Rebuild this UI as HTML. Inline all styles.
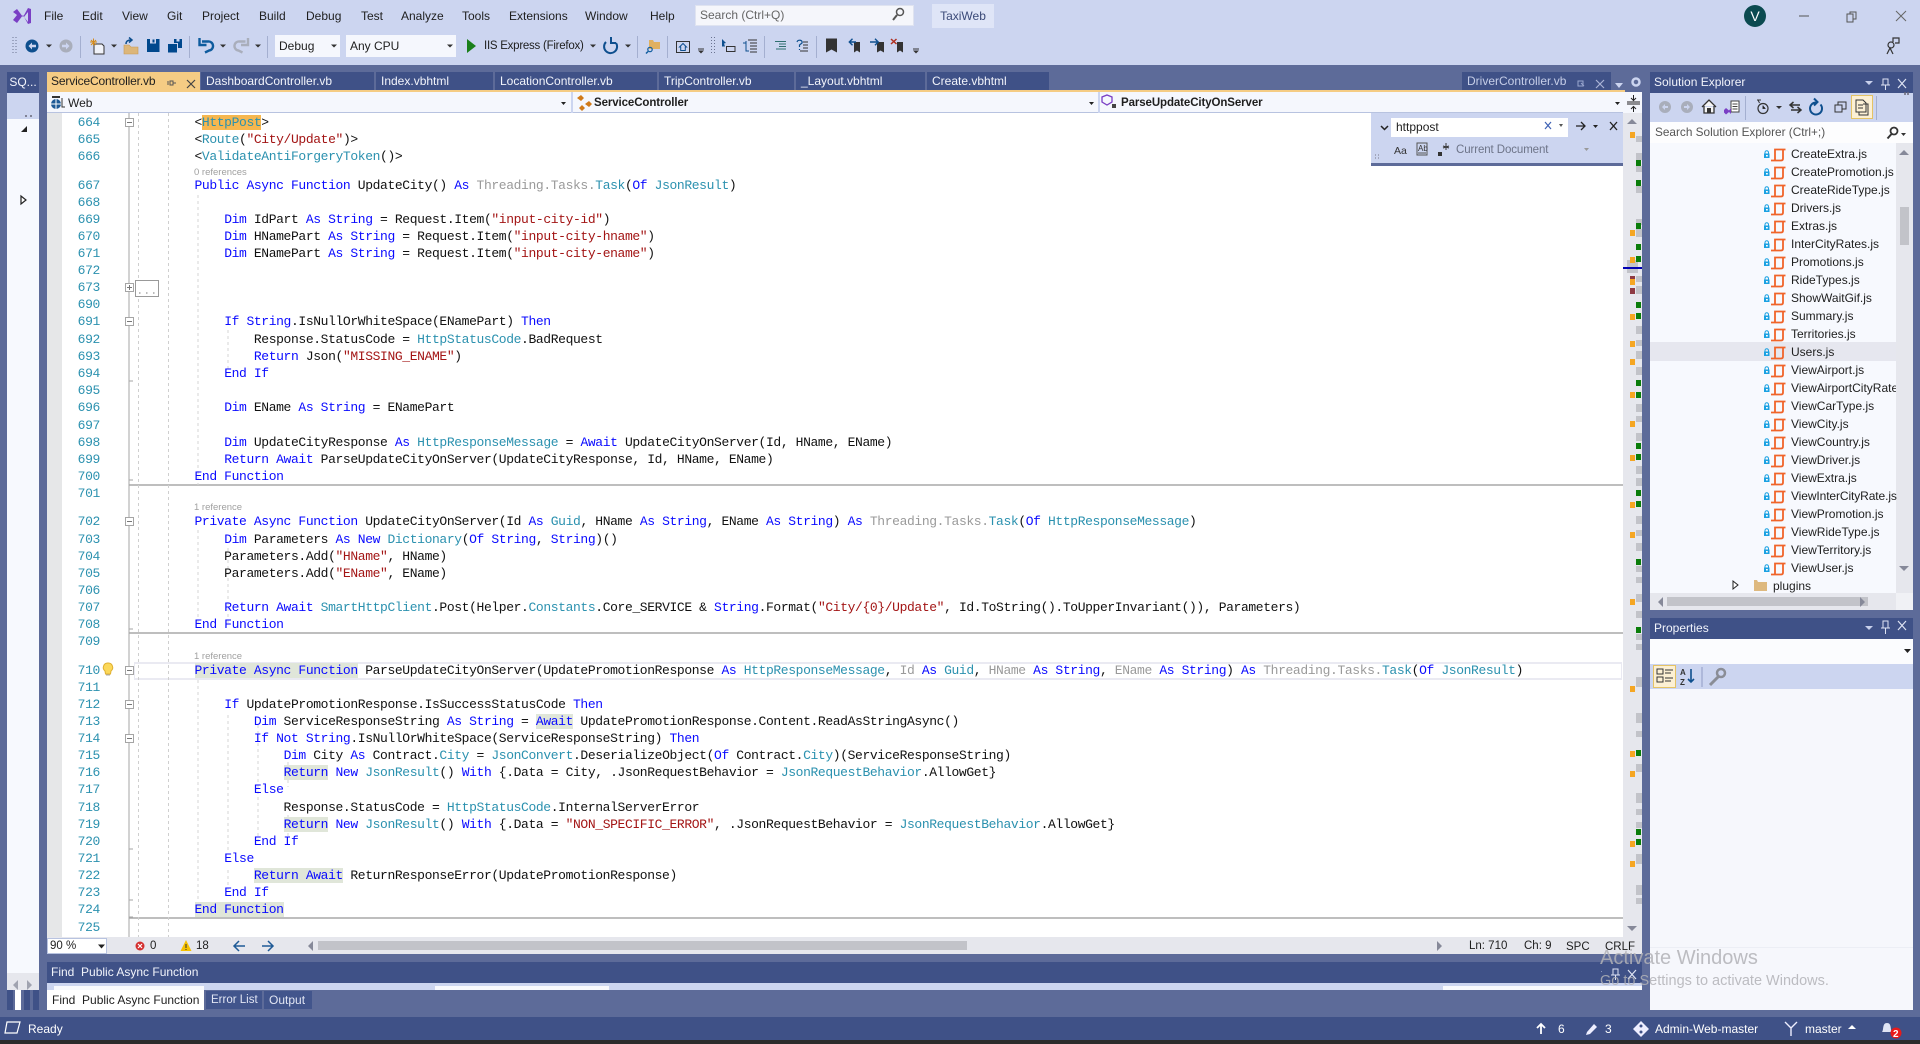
<!DOCTYPE html>
<html><head><meta charset="utf-8"><title>TaxiWeb</title>
<style>
html,body{margin:0;padding:0;background:#5d6b99}
#r{position:relative;width:1920px;height:1044px;overflow:hidden;background:#5d6b99;font:12px "Liberation Sans",sans-serif;color:#1e1e1e}
#r div{position:absolute;white-space:pre}
.b{position:absolute}
.m{top:9px;height:15px;line-height:15px;color:#1e1e1e}
.tb{top:72px;height:18px;line-height:18px;background:#3f5187;color:#f2f4fb;padding-left:5px;box-sizing:border-box}
.c{left:194.5px;height:17px;font:13px/17px "Liberation Mono",monospace;letter-spacing:-.38px;color:#111}
.n{left:70px;width:30px;text-align:right;height:17px;font:13px/17px "Liberation Mono",monospace;letter-spacing:-.36px;color:#2b91af}
.r{left:194px;font-size:9.5px;line-height:11px;color:#a0a0a0}
.f{left:1791px;height:18px;line-height:18px;color:#1e1e1e;font-size:12px}
.k{color:#0a0aff}.t{color:#2b91af}.s{color:#a31515}.g{color:#9a9a9a}
.h{background:#e0e6d9}
.w{color:#fff}
</style></head><body><div id="r">

<!-- top chrome -->
<div style="left:0;top:0;width:1920px;height:65px;background:#ccd5f0"></div>
<div class="m" style="left:44px">File</div><div class="m" style="left:82px">Edit</div><div class="m" style="left:122px">View</div><div class="m" style="left:167px">Git</div><div class="m" style="left:202px">Project</div><div class="m" style="left:259px">Build</div><div class="m" style="left:306px">Debug</div><div class="m" style="left:361px">Test</div><div class="m" style="left:401px">Analyze</div><div class="m" style="left:462px">Tools</div><div class="m" style="left:509px">Extensions</div><div class="m" style="left:585px">Window</div><div class="m" style="left:650px">Help</div>
<div style="left:695px;top:5px;width:219px;height:21px;background:#f5f6fb;border:1px solid #dfe3f0;box-sizing:border-box;line-height:19px;padding-left:4px;color:#666">Search (Ctrl+Q)</div>
<div style="left:932px;top:4px;width:62px;height:24px;background:#dfe5f7;line-height:24px;text-align:center;color:#3b4a78">TaxiWeb</div>
<div style="left:275px;top:35px;width:65px;height:22px;background:#f5f7fd;line-height:22px;padding-left:4px;box-sizing:border-box">Debug</div>
<div style="left:346px;top:35px;width:110px;height:22px;background:#f5f7fd;line-height:22px;padding-left:4px;box-sizing:border-box">Any CPU</div>
<div style="left:484px;top:38px;line-height:16px;color:#1e1e1e;font-size:11.5px;letter-spacing:-.25px">IIS Express (Firefox)</div>
<div style="left:1744px;top:5px;width:22px;height:22px;border-radius:50%;background:#0b4a50;color:#fff;text-align:center;line-height:22px;font-size:14px">V</div>

<svg class="b" style="left:0;top:0" width="1920" height="65">
<path d="M13 12l4-3 6 8 5-9 3 1v14l-3 1-5-9-6 8-4-3 4-5z" fill="#7a3fc4"/><path d="M24 17l4-5v10z" fill="#ccd5f0"/>
<circle cx="900" cy="12" r="3.5" fill="none" stroke="#555" stroke-width="1.5"/><path d="M897 15l-4 5" stroke="#555" stroke-width="2"/>
<path d="M1799 16h10" stroke="#555" stroke-width="1"/><path d="M1847 14h6v8h-6zM1850 14v-2h6v7h-3" fill="none" stroke="#555"/><path d="M1896 11l10 10M1906 11l-10 10" stroke="#666" stroke-width="1"/>
<!-- grips -->
<path d="M13 37v17M16 37v17M711.500 37v17M714.500 37v17" stroke="#6a7390" stroke-dasharray="1 2"/>
<!-- nav -->
<circle cx="32" cy="46" r="6.500" fill="#0e4f8e"/><path d="M28.500 46l3.500-3.500v2.300h4v2.400h-4v2.300z" fill="#ccd5f0"/>
<circle cx="66" cy="46" r="6.500" fill="#a9aebb"/><path d="M69.500 46l-3.500-3.500v2.300h-4v2.400h4v2.300z" fill="#ccd5f0"/>
<g fill="#333"><path d="M46 44.500h6l-3 3zM111 44.500h6l-3 3zM220 44.500h6l-3 3zM255 44.500h6l-3 3zM331 44.500h6l-3 3zM447 44.500h6l-3 3zM590 44.500h6l-3 3zM625 44.500h6l-3 3z"/></g>
<path d="M80.500 36v22M189.500 36v22M267.500 36v22M637.500 36v22M667.500 36v22M764.500 36v22M816.500 36v22" stroke="#a4afd0"/>
<!-- new project -->
<path d="M94 44h8l2 2v8H94z" fill="#f0f2f9" stroke="#333"/><path d="M90 42h7M93.500 38.500v7M91 40l5 5M96 40l-5 5" stroke="#d48a1a"/>
<!-- open -->
<path d="M124 45h5l2 2h7v7h-14z" fill="#dcb67a" stroke="#c79a55" stroke-width=".6"/><path d="M126 44c0-3 2-4 5-4M129 37.500l3 2.500-3 2.500" fill="none" stroke="#0e4f8e" stroke-width="1.500"/>
<!-- save -->
<path d="M147 39h12.500v13H147z" fill="#00488d"/><rect x="150" y="39" width="6" height="4.500" fill="#ccd5f0"/><rect x="152.500" y="39.500" width="2" height="3" fill="#00488d"/>
<path d="M168 44h9v8.500h-9z" fill="#00488d"/><path d="M174 39h8v9h-4v-5h-4z" fill="#00488d"/><rect x="176.500" y="39" width="3" height="2.500" fill="#ccd5f0"/>
<!-- undo/redo -->
<path d="M202 41.500h6a4.500 4.500 0 0 1 1 9l-4 2M199.500 38v7h7" fill="none" stroke="#0e5c9e" stroke-width="2.400"/>
<path d="M245.500 41.500h-6a4.500 4.500 0 0 0-1 9l4 2M248 38v7h-7" fill="none" stroke="#a9aebb" stroke-width="2.400"/>
<path d="M467 39l9 7-9 7z" fill="#1a7f1a"/>
<path d="M606 42a6.500 6.500 0 1 0 10 1M611 37v6h5" fill="none" stroke="#0e4f8e" stroke-width="2"/>
<!-- find in files folder -->
<path d="M649 40h4l1 2h6v7h-11z" fill="#e0b060"/><circle cx="650" cy="49.500" r="2.200" fill="none" stroke="#0e5c9e" stroke-width="1.200"/><path d="M648 51.500l-2 2" stroke="#0e5c9e" stroke-width="1.500"/>
<!-- browser -->
<rect x="676.500" y="41.500" width="13" height="11" fill="none" stroke="#333"/><path d="M683 43.500l-3.500 3.500h1.200v3.500h4.600V47h1.200z" fill="none" stroke="#0e4f8e"/>
<path d="M698 49h6" stroke="#333"/><path d="M698 50.500h6l-3 3z" fill="#333"/>
<path d="M913 49h6" stroke="#333"/><path d="M913 50.500h6l-3 3z" fill="#333"/>
<!-- comment boxes -->
<path d="M722 39l4 4-2 .5 1 3h-3z" fill="#0e4f8e"/><rect x="726.500" y="46.500" width="8.500" height="5" fill="none" stroke="#333"/>
<path d="M743 43h3v8h3M746 41v4" fill="none" stroke="#0e4f8e"/><path d="M748 40h9M750 43h7M750 46h7M750 49h7M750 52h7" stroke="#333"/>
<path d="M775 41.500h11M779 44h7M779 46.500h7M776 49h10" stroke="#2f6f6f"/>
<path d="M797 42c1-3 6-2 5 1l-2.500 2v2M799.500 49v1" fill="none" stroke="#0e4f8e" stroke-width="1.200"/><path d="M803 42h5M803 45h5M803 48h5M800 51h8" stroke="#333"/>
<!-- bookmarks -->
<path d="M826 38.500h11v14l-5.500-3-5.500 3z" fill="#333"/>
<path d="M854 42h6v10.500l-3-2-3 2z" fill="#333"/><path d="M849 42h7M852.500 38.800l-3.200 3.200 3.200 3.200" fill="none" stroke="#0e4f8e" stroke-width="1.400"/>
<path d="M877 42h7v10.500l-3.500-2-3.500 2z" fill="#333"/><path d="M870 42h7M875 38.800l3.200 3.200-3.200 3.200" fill="none" stroke="#0e4f8e" stroke-width="1.400"/>
<path d="M897 42h6v10.500l-3-2-3 2z" fill="#333"/><path d="M891 39l5.500 5M896.500 39l-5.500 5" stroke="#b03020" stroke-width="1.500"/>
<circle cx="1891" cy="45" r="3" fill="none" stroke="#333" stroke-width="1.200"/><path d="M1887 54l3-6 3 6M1893 42v-4h6v5h-4" fill="none" stroke="#333" stroke-width="1.200"/>
</svg>

<!-- tab row -->
<div style="left:7px;top:72px;width:32px;height:21px;background:#3f5187;color:#f2f4fb;line-height:21px;text-align:center">SQ...</div>
<div style="left:7px;top:93px;width:32px;height:26px;background:#ccd5f0"></div>
<div style="left:7px;top:119px;width:32px;height:854px;background:#f7f9fe"></div>
<div style="left:7px;top:973px;width:32px;height:17px;background:#e6e7ed"></div>
<div style="left:47px;top:72px;width:153px;height:18px;background:#f5cc84;line-height:18px;padding-left:4px;box-sizing:border-box;letter-spacing:-.15px">ServiceController.vb</div>
<div class="tb" style="left:201px;width:173px">DashboardController.vb</div>
<div class="tb" style="left:376px;width:117px">Index.vbhtml</div>
<div class="tb" style="left:495px;width:162px">LocationController.vb</div>
<div class="tb" style="left:659px;width:135px">TripController.vb</div>
<div class="tb" style="left:796px;width:129px">_Layout.vbhtml</div>
<div class="tb" style="left:927px;width:122px">Create.vbhtml</div>
<div class="tb" style="left:1462px;width:149px;color:#c6cee8">DriverController.vb</div>
<div style="left:47px;top:90px;width:1578px;height:2px;background:#f5cc84"></div>
<svg class="b" style="left:0;top:60px" width="1920" height="60">
<path d="M170 21h3v4h-3zM173 23h3M168 21v4" stroke="#555" fill="none"/><path d="M187 20l8 8M195 20l-8 8" stroke="#444" stroke-width="1.200"/>
<path d="M1578 21h5v5h-5zM1581 23l3 3" stroke="#9aa6cf" fill="none"/><path d="M1596 20l8 8M1604 20l-8 8" stroke="#aab4d6" stroke-width="1.200"/>
<path d="M1615 23h8l-4 5z" fill="#ccd5f0"/><circle cx="1636" cy="22" r="3.500" fill="none" stroke="#ccd5f0" stroke-width="2.500"/>
</svg>

<!-- nav bar -->
<div style="left:47px;top:92px;width:1578px;height:21px;background:#f5f7fd"></div>
<div style="left:47px;top:112px;width:1576px;height:1px;background:#b8c3e0"></div>
<div style="left:571px;top:92px;width:2px;height:21px;background:#ccd5f0"></div>
<div style="left:1098px;top:92px;width:2px;height:21px;background:#ccd5f0"></div>
<div style="left:68px;top:94px;line-height:19px">Web</div>
<div style="left:594px;top:95px;line-height:17px;font-weight:bold;font-size:11.500px;letter-spacing:-.1px">ServiceController</div>
<div style="left:1121px;top:95px;line-height:17px;font-weight:bold;font-size:11.500px;letter-spacing:-.1px">ParseUpdateCityOnServer</div>
<div style="left:1625px;top:92px;width:17px;height:21px;background:#f5f7fd"></div>
<svg class="b" style="left:0;top:90px" width="1920" height="26">
<circle cx="56" cy="14" r="5" fill="#1e5a96"/><path d="M51 14h10M56 9v10" stroke="#fff"/><rect x="52" y="6" width="8" height="2" fill="#333"/><path d="M62 8v9h3" stroke="#333" fill="none"/>
<path d="M561 12h5l-2.500 3zM1089 12h5l-2.500 3zM1615 12h5l-2.500 3z" fill="#222"/>
<path d="M577 8l4-3 3 3-3 3zM585 14l4-3 3 3-3 3zM579 18l3-3 3 3-3 3z" fill="#d07a1a"/>
<path d="M1107 5l5 2v5l-5 3-5-3v-5z" fill="none" stroke="#7a3fc4" stroke-width="1.300"/><rect x="1112" y="14" width="4" height="4" fill="#444"/>
<path d="M1627 12h13M1627 14h13M1633.500 5v5M1633.500 17v5" stroke="#222"/><path d="M1631 8l2.500 2.500 2.500-2.500M1631 19l2.500-2.500 2.500 2.500" stroke="#222" fill="none"/>
</svg>

<!-- editor -->
<div style="left:47px;top:113px;width:1576px;height:824px;background:#fff;overflow:hidden"></div>
<div style="left:47px;top:113px;width:15px;height:824px;background:#e6e7e8"></div>
<div style="left:134px;top:662px;width:1488px;height:18px;border:1px solid #eaeaf2;border-width:2px 1px;box-sizing:border-box"></div>
<svg class="b" style="left:0;top:0" width="1642" height="937">
<path d="M129 113v824" stroke="#a5a5a5"/>
<path d="M129 485H1623M129 633H1623M129 918H1623" stroke="#a8a8a8" stroke-width="1.500"/>
<path d="M138.500 113v824M168.500 113v824" stroke="#cfcfcf" stroke-dasharray="3 3"/>
<path d="M198 195v290M198 530v94M198 680v225M228 330v40M228 548v76M228 715v135M258 725v120M228 870v20M288 762v25M288 815v22" stroke="#d4d4d4" stroke-dasharray="3 3"/>
<g fill="#fff" stroke="#a5a5a5"><rect x="125.500" y="118.500" width="8" height="8"/><rect x="125.500" y="283.500" width="8" height="8"/><rect x="125.500" y="317.500" width="8" height="8"/><rect x="125.500" y="517.500" width="8" height="8"/><rect x="125.500" y="666.500" width="8" height="8"/><rect x="125.500" y="700.500" width="8" height="8"/><rect x="125.500" y="734.500" width="8" height="8"/></g>
<path d="M127 122.500h5M127 287.500h5M129.500 285v5M127 321.500h5M127 521.500h5M127 670.500h5M127 704.500h5M127 738.500h5" stroke="#777"/>
<path d="M129 381h4M129 480h4M129 629h4M129 849h4M129 900h4M129 917h4" stroke="#a5a5a5"/>
<rect x="135.500" y="280.500" width="23" height="16" fill="#fff" stroke="#999"/><path d="M139 293h1.500M146 293h1.500M153 293h1.500" stroke="#777"/>
<path d="M108 663a4.500 4.500 0 0 1 3 8l-.5 3h-5l-.5-3a4.500 4.500 0 0 1 3-8z" fill="#fbd85a" stroke="#e0b030"/><path d="M106 675h4" stroke="#aaa"/>
</svg>

<div class="n" style="top:114px">664</div><div class="n" style="top:131px">665</div><div class="n" style="top:148px">666</div><div class="n" style="top:177px">667</div><div class="n" style="top:194px">668</div><div class="n" style="top:211px">669</div><div class="n" style="top:228px">670</div><div class="n" style="top:245px">671</div><div class="n" style="top:262px">672</div><div class="n" style="top:279px">673</div><div class="n" style="top:296px">690</div><div class="n" style="top:313px">691</div><div class="n" style="top:331px">692</div><div class="n" style="top:348px">693</div><div class="n" style="top:365px">694</div><div class="n" style="top:382px">695</div><div class="n" style="top:399px">696</div><div class="n" style="top:417px">697</div><div class="n" style="top:434px">698</div><div class="n" style="top:451px">699</div><div class="n" style="top:468px">700</div><div class="n" style="top:485px">701</div><div class="n" style="top:513px">702</div><div class="n" style="top:531px">703</div><div class="n" style="top:548px">704</div><div class="n" style="top:565px">705</div><div class="n" style="top:582px">706</div><div class="n" style="top:599px">707</div><div class="n" style="top:616px">708</div><div class="n" style="top:633px">709</div><div class="n" style="top:662px">710</div><div class="n" style="top:679px">711</div><div class="n" style="top:696px">712</div><div class="n" style="top:713px">713</div><div class="n" style="top:730px">714</div><div class="n" style="top:747px">715</div><div class="n" style="top:764px">716</div><div class="n" style="top:781px">717</div><div class="n" style="top:799px">718</div><div class="n" style="top:816px">719</div><div class="n" style="top:833px">720</div><div class="n" style="top:850px">721</div><div class="n" style="top:867px">722</div><div class="n" style="top:884px">723</div><div class="n" style="top:901px">724</div><div class="n" style="top:919px">725</div>

<div class="r" style="top:167px">0 references</div>
<div class="r" style="top:502px">1 reference</div>
<div class="r" style="top:651px">1 reference</div>

<div class="c" style="top:114px">&lt;<span class="t" style="background:#f6b74f">HttpPost</span>&gt;</div>
<div class="c" style="top:131px">&lt;<span class="t">Route</span>(<span class="s">"City/Update"</span>)&gt;</div>
<div class="c" style="top:148px">&lt;<span class="t">ValidateAntiForgeryToken</span>()&gt;</div>
<div class="c" style="top:177px"><span class="k">Public Async Function</span> UpdateCity() <span class="k">As</span> <span class="g">Threading.Tasks.</span><span class="t">Task</span>(<span class="k">Of</span> <span class="t">JsonResult</span>)</div>
<div class="c" style="top:211px">    <span class="k">Dim</span> IdPart <span class="k">As</span> <span class="k">String</span> = Request.Item(<span class="s">"input-city-id"</span>)</div>
<div class="c" style="top:228px">    <span class="k">Dim</span> HNamePart <span class="k">As</span> <span class="k">String</span> = Request.Item(<span class="s">"input-city-hname"</span>)</div>
<div class="c" style="top:245px">    <span class="k">Dim</span> ENamePart <span class="k">As</span> <span class="k">String</span> = Request.Item(<span class="s">"input-city-ename"</span>)</div>
<div class="c" style="top:313px">    <span class="k">If</span> <span class="k">String</span>.IsNullOrWhiteSpace(ENamePart) <span class="k">Then</span></div>
<div class="c" style="top:331px">        Response.StatusCode = <span class="t">HttpStatusCode</span>.BadRequest</div>
<div class="c" style="top:348px">        <span class="k">Return</span> Json(<span class="s">"MISSING_ENAME"</span>)</div>
<div class="c" style="top:365px">    <span class="k">End If</span></div>
<div class="c" style="top:399px">    <span class="k">Dim</span> EName <span class="k">As</span> <span class="k">String</span> = ENamePart</div>
<div class="c" style="top:434px">    <span class="k">Dim</span> UpdateCityResponse <span class="k">As</span> <span class="t">HttpResponseMessage</span> = <span class="k">Await</span> UpdateCityOnServer(Id, HName, EName)</div>
<div class="c" style="top:451px">    <span class="k">Return Await</span> ParseUpdateCityOnServer(UpdateCityResponse, Id, HName, EName)</div>
<div class="c" style="top:468px"><span class="k">End Function</span></div>
<div class="c" style="top:513px"><span class="k">Private Async Function</span> UpdateCityOnServer(Id <span class="k">As</span> <span class="t">Guid</span>, HName <span class="k">As</span> <span class="k">String</span>, EName <span class="k">As</span> <span class="k">String</span>) <span class="k">As</span> <span class="g">Threading.Tasks.</span><span class="t">Task</span>(<span class="k">Of</span> <span class="t">HttpResponseMessage</span>)</div>
<div class="c" style="top:531px">    <span class="k">Dim</span> Parameters <span class="k">As New</span> <span class="t">Dictionary</span>(<span class="k">Of String</span>, <span class="k">String</span>)()</div>
<div class="c" style="top:548px">    Parameters.Add(<span class="s">"HName"</span>, HName)</div>
<div class="c" style="top:565px">    Parameters.Add(<span class="s">"EName"</span>, EName)</div>
<div class="c" style="top:599px">    <span class="k">Return Await</span> <span class="t">SmartHttpClient</span>.Post(Helper.<span class="t">Constants</span>.Core_SERVICE &amp; <span class="k">String</span>.Format(<span class="s">"City/{0}/Update"</span>, Id.ToString().ToUpperInvariant()), Parameters)</div>
<div class="c" style="top:616px"><span class="k">End Function</span></div>
<div class="c" style="top:662px"><span class="k h">Private Async Function</span> ParseUpdateCityOnServer(UpdatePromotionResponse <span class="k">As</span> <span class="t">HttpResponseMessage</span>, <span class="g">Id</span> <span class="k">As</span> <span class="t">Guid</span>, <span class="g">HName</span> <span class="k">As</span> <span class="k">String</span>, <span class="g">EName</span> <span class="k">As</span> <span class="k">String</span>) <span class="k">As</span> <span class="g">Threading.Tasks.</span><span class="t">Task</span>(<span class="k">Of</span> <span class="t">JsonResult</span>)</div>
<div class="c" style="top:696px">    <span class="k">If</span> UpdatePromotionResponse.IsSuccessStatusCode <span class="k">Then</span></div>
<div class="c" style="top:713px">        <span class="k">Dim</span> ServiceResponseString <span class="k">As</span> <span class="k">String</span> = <span class="k h">Await</span> UpdatePromotionResponse.Content.ReadAsStringAsync()</div>
<div class="c" style="top:730px">        <span class="k">If Not</span> <span class="k">String</span>.IsNullOrWhiteSpace(ServiceResponseString) <span class="k">Then</span></div>
<div class="c" style="top:747px">            <span class="k">Dim</span> City <span class="k">As</span> Contract.<span class="t">City</span> = <span class="t">JsonConvert</span>.DeserializeObject(<span class="k">Of</span> Contract.<span class="t">City</span>)(ServiceResponseString)</div>
<div class="c" style="top:764px">            <span class="k h">Return</span> <span class="k">New</span> <span class="t">JsonResult</span>() <span class="k">With</span> {.Data = City, .JsonRequestBehavior = <span class="t">JsonRequestBehavior</span>.AllowGet}</div>
<div class="c" style="top:781px">        <span class="k">Else</span></div>
<div class="c" style="top:799px">            Response.StatusCode = <span class="t">HttpStatusCode</span>.InternalServerError</div>
<div class="c" style="top:816px">            <span class="k h">Return</span> <span class="k">New</span> <span class="t">JsonResult</span>() <span class="k">With</span> {.Data = <span class="s">"NON_SPECIFIC_ERROR"</span>, .JsonRequestBehavior = <span class="t">JsonRequestBehavior</span>.AllowGet}</div>
<div class="c" style="top:833px">        <span class="k">End If</span></div>
<div class="c" style="top:850px">    <span class="k">Else</span></div>
<div class="c" style="top:867px">        <span class="k h">Return Await</span> ReturnResponseError(UpdatePromotionResponse)</div>
<div class="c" style="top:884px">    <span class="k">End If</span></div>
<div class="c" style="top:901px"><span class="k h">End Function</span></div>

<!-- find widget -->
<div style="left:1371px;top:113px;width:252px;height:53px;background:#ccd5f0;border-bottom:3px solid #5d6b99;box-sizing:border-box"></div>
<div style="left:1391px;top:118px;width:177px;height:19px;background:#fff;line-height:19px;padding-left:5px;box-sizing:border-box;font-size:12px">httppost</div>
<div style="left:1456px;top:143px;line-height:15px;color:#6d7488;font-size:11.500px;letter-spacing:-.1px">Current Document</div>
<div style="left:1394px;top:144px;line-height:14px;font-size:10.500px;color:#333">Aa</div>
<svg class="b" style="left:1371px;top:113px" width="252" height="50">
<path d="M10 13l3.500 3.500L17 13" fill="none" stroke="#222" stroke-width="1.500"/>
<path d="M174 9l6 7M180 9l-6 7" stroke="#3f62b5" stroke-width="1.200"/><path d="M188 11h4l-2 3z" fill="#555"/>
<path d="M205 13h9M210 9l4 4-4 4" fill="none" stroke="#222" stroke-width="1.300"/><path d="M222 12h5l-2.500 3z" fill="#222"/><path d="M239 9l7 8M246 9l-7 8" stroke="#222" stroke-width="1.300"/>
<rect x="46" y="30" width="10" height="12" fill="none" stroke="#555"/><path d="M47 40h8" stroke="#555"/><text x="47" y="38" font-size="8" font-family="Liberation Sans" fill="#333">Ab</text>
<rect x="67" y="39" width="4" height="4" fill="#333"/><path d="M75 30v7M72 33l6 2M78 33l-6 2" stroke="#333"/>
<path d="M213 35h5l-2.500 3z" fill="#999"/>
<path d="M4 45h1M7 45h1M4 42h1M7 42h1" stroke="#778"/>
</svg>

<!-- editor scrollbar -->
<div style="left:1623px;top:113px;width:19px;height:824px;background:#e6e7ed"></div>
<svg class="b" style="left:1623px;top:0" width="19" height="937">
<path d="M9 119l5 5h-10zM4 926h10l-5 5z" fill="#868999"/>
<rect x="4" y="260" width="11" height="13" fill="#c2c3c9"/>
<g fill="#c2c3c9"><rect x="13" y="136" width="6" height="6"/><rect x="13" y="153" width="6" height="7"/><rect x="13" y="166" width="6" height="6"/><rect x="13" y="186" width="6" height="7"/><rect x="13" y="219" width="6" height="6"/><rect x="13" y="229" width="6" height="8"/><rect x="13" y="276" width="6" height="6"/><rect x="13" y="286" width="6" height="8"/><rect x="13" y="326" width="6" height="8"/><rect x="13" y="340" width="6" height="6"/><rect x="13" y="351" width="6" height="8"/><rect x="13" y="367" width="6" height="8"/><rect x="13" y="404" width="6" height="8"/><rect x="13" y="416" width="6" height="6"/><rect x="13" y="433" width="6" height="8"/><rect x="13" y="466" width="6" height="8"/><rect x="13" y="478" width="6" height="8"/><rect x="13" y="516" width="6" height="8"/><rect x="13" y="530" width="6" height="6"/><rect x="13" y="543" width="6" height="8"/><rect x="13" y="566" width="6" height="6"/><rect x="13" y="577" width="6" height="6"/><rect x="13" y="594" width="6" height="8"/><rect x="13" y="611" width="6" height="7"/><rect x="13" y="634" width="6" height="6"/><rect x="13" y="644" width="6" height="6"/><rect x="13" y="677" width="6" height="10"/><rect x="13" y="713" width="6" height="10"/><rect x="13" y="731" width="6" height="6"/><rect x="13" y="764" width="6" height="8"/><rect x="13" y="793" width="6" height="10"/><rect x="13" y="809" width="6" height="6"/><rect x="13" y="822" width="6" height="6"/><rect x="13" y="854" width="6" height="10"/><rect x="13" y="885" width="6" height="10"/><rect x="13" y="898" width="6" height="6"/></g>
<g fill="#0a7d0a"><rect x="13" y="160" width="5" height="6"/><rect x="13" y="180" width="5" height="6"/><rect x="13" y="223" width="5" height="6"/><rect x="13" y="244" width="5" height="6"/><rect x="13" y="256" width="5" height="6"/><rect x="13" y="302" width="5" height="6"/><rect x="13" y="313" width="5" height="6"/><rect x="13" y="380" width="5" height="6"/><rect x="13" y="392" width="5" height="6"/><rect x="13" y="443" width="5" height="6"/><rect x="13" y="454" width="5" height="6"/><rect x="13" y="490" width="5" height="6"/><rect x="13" y="501" width="5" height="6"/><rect x="13" y="559" width="5" height="6"/><rect x="13" y="627" width="5" height="6"/><rect x="13" y="750" width="5" height="6"/><rect x="13" y="829" width="5" height="6"/><rect x="13" y="839" width="5" height="6"/></g>
<g fill="#8e3a43"><rect x="7" y="276" width="5" height="7"/><rect x="7" y="288" width="5" height="6"/></g>
<g fill="#f5a623"><rect x="7" y="132" width="5" height="6"/><rect x="7" y="230" width="5" height="6"/><rect x="7" y="257" width="5" height="6"/><rect x="7" y="279" width="5" height="6"/><rect x="7" y="314" width="5" height="6"/><rect x="7" y="341" width="5" height="6"/><rect x="7" y="359" width="5" height="6"/><rect x="7" y="392" width="5" height="6"/><rect x="7" y="421" width="5" height="6"/><rect x="7" y="455" width="5" height="6"/><rect x="7" y="502" width="5" height="6"/><rect x="7" y="532" width="5" height="6"/><rect x="7" y="599" width="5" height="6"/><rect x="7" y="686" width="5" height="6"/><rect x="7" y="751" width="5" height="6"/><rect x="7" y="771" width="5" height="6"/><rect x="7" y="841" width="5" height="6"/><rect x="7" y="861" width="5" height="6"/></g>
<rect x="0" y="267" width="19" height="2" fill="#0000b4"/>
</svg>

<!-- left strip icons -->
<svg class="b" style="left:0;top:90px" width="47" height="120">
<path d="M26 27v-2M31 27v-2" stroke="#667" stroke-width="1.500"/>
<path d="M27 36v6h-6z" fill="#222"/><path d="M21 106v8l5-4z" fill="#fff" stroke="#222" stroke-width="1.200"/>
</svg>
<svg class="b" style="left:0;top:970px" width="47" height="50">
<path d="M18 10l-5 5 5 5zM27 10l5 5-5 5z" fill="#a0a3b0"/>
<rect x="7" y="20" width="6" height="20" fill="#3f5187"/><rect x="15" y="20" width="6" height="20" fill="#fff"/><rect x="24" y="20" width="6" height="20" fill="#3f5187"/><rect x="33" y="20" width="6" height="20" fill="#3f5187"/>
</svg>

<!-- editor status -->
<div style="left:47px;top:937px;width:1595px;height:17px;background:#e6e7ed"></div>
<div style="left:47px;top:938px;width:60px;height:16px;background:#fff;border:1px solid #b8c3e0;box-sizing:border-box;line-height:14px;padding-left:2px;font-size:11.500px">90 %</div>
<div style="left:150px;top:938px;line-height:16px;font-size:11.500px">0</div>
<div style="left:196px;top:938px;line-height:16px;font-size:11.500px">18</div>
<div style="left:318px;top:941px;width:649px;height:9px;background:#c2c3c9"></div>
<div style="left:1469px;top:938px;line-height:16px;font-size:11.500px">Ln: 710</div>
<div style="left:1524px;top:938px;line-height:16px;font-size:11.500px">Ch: 9</div>
<div style="left:1566px;top:939px;line-height:16px;font-size:11.500px">SPC</div>
<div style="left:1605px;top:939px;line-height:16px;font-size:11.500px">CRLF</div>
<svg class="b" style="left:0;top:935px" width="1500" height="20">
<path d="M98 9.500h7l-3.500 4z" fill="#222"/>
<circle cx="140" cy="11" r="4.500" fill="#d43030"/><path d="M138 9l4 4M142 9l-4 4" stroke="#fff" stroke-width="1.200"/>
<path d="M186 5l5.500 11h-11z" fill="#f6c100"/><path d="M186 9v4M186 14v1" stroke="#333"/>
<path d="M234 11h11M239 6l-5 5 5 5" fill="none" stroke="#1e5a96" stroke-width="1.500"/><path d="M262 11h11M268 6l5 5-5 5" fill="none" stroke="#1e5a96" stroke-width="1.500"/>
<path d="M313 6l-5 5 5 5zM1437 6l5 5-5 5z" fill="#868999"/>
</svg>

<!-- find panel -->
<div style="left:47px;top:962px;width:1595px;height:21px;background:#3f5187;line-height:21px;color:#f2f4fb;padding-left:4px;box-sizing:border-box">Find  Public Async Function</div>
<div style="left:47px;top:983px;width:1595px;height:7px;background:#ccd5f0"></div>
<div style="left:54px;top:986px;width:150px;height:4px;background:#f8f9fd"></div>
<div style="left:435px;top:986px;width:174px;height:4px;background:#f8f9fd"></div>
<div style="left:1443px;top:986px;width:199px;height:4px;background:#f8f9fd"></div>
<div style="left:47px;top:990px;width:157px;height:20px;background:#fff;line-height:20px;padding-left:5px;box-sizing:border-box">Find  Public Async Function</div>
<div style="left:206px;top:991px;width:56px;height:18px;background:#42558c;line-height:18px;padding-left:5px;box-sizing:border-box;color:#e2e6f4;font-size:11.500px">Error List</div>
<div style="left:264px;top:991px;width:48px;height:18px;background:#42558c;line-height:18px;padding-left:5px;box-sizing:border-box;color:#e2e6f4;font-size:12px">Output</div>
<svg class="b" style="left:1601px;top:965px" width="40" height="20"><path d="M-6 6h7l-3.500 4z" fill="#c2cbe6"/><path d="M12 4h5v6h-5zM14.500 10v5M10 10h9" stroke="#dfe4f4" fill="none"/><path d="M27 5l8 9M35 5l-8 9" stroke="#dfe4f4" stroke-width="1.200"/></svg>

<!-- Solution Explorer -->
<div style="left:1650px;top:72px;width:263px;height:21px;background:#3f5187;line-height:21px;color:#f2f4fb;padding-left:4px;box-sizing:border-box;font-size:12px">Solution Explorer</div>
<div style="left:1650px;top:93px;width:263px;height:29px;background:#ccd5f0"></div>
<div style="left:1650px;top:122px;width:263px;height:21px;background:#fdfdfe;line-height:21px;padding-left:5px;box-sizing:border-box;color:#555;font-size:11.800px">Search Solution Explorer (Ctrl+;)</div>
<div style="left:1650px;top:143px;width:246px;height:450px;background:#f7f9fe"></div>
<div style="left:1650px;top:342px;width:246px;height:19px;background:#e6e7ef"></div>
<div style="left:1896px;top:143px;width:17px;height:450px;background:#e6e7ed"></div>
<div style="left:1900px;top:207px;width:9px;height:38px;background:#c2c3c9"></div>
<div style="left:1650px;top:593px;width:263px;height:17px;background:#e6e7ed"></div>
<div style="left:1667px;top:597px;width:201px;height:9px;background:#c2c3c9"></div>
<div style="left:1896px;top:593px;width:17px;height:17px;background:#f0f1f5"></div>

<div class="f" style="top:145px">CreateExtra.js</div><div class="f" style="top:163px">CreatePromotion.js</div><div class="f" style="top:181px">CreateRideType.js</div><div class="f" style="top:199px">Drivers.js</div><div class="f" style="top:217px">Extras.js</div><div class="f" style="top:235px">InterCityRates.js</div><div class="f" style="top:253px">Promotions.js</div><div class="f" style="top:271px">RideTypes.js</div><div class="f" style="top:289px">ShowWaitGif.js</div><div class="f" style="top:307px">Summary.js</div><div class="f" style="top:325px">Territories.js</div><div class="f" style="top:343px">Users.js</div><div class="f" style="top:361px">ViewAirport.js</div>
<div class="f" style="top:379px;width:105px;overflow:hidden">ViewAirportCityRate</div>
<div class="f" style="top:397px">ViewCarType.js</div><div class="f" style="top:415px">ViewCity.js</div><div class="f" style="top:433px">ViewCountry.js</div><div class="f" style="top:451px">ViewDriver.js</div><div class="f" style="top:469px">ViewExtra.js</div><div class="f" style="top:487px;letter-spacing:-.1px">ViewInterCityRate.js</div><div class="f" style="top:505px">ViewPromotion.js</div><div class="f" style="top:523px">ViewRideType.js</div><div class="f" style="top:541px">ViewTerritory.js</div><div class="f" style="top:559px">ViewUser.js</div><div class="f" style="top:577px;left:1773px">plugins</div>

<svg class="b" style="left:1650px;top:60px" width="263" height="560">
<defs><g id="js"><path d="M4 13V2.500H14.500M0 13.500H10Q12 13.500 12 11.500V3" fill="none" stroke="#f0642a" stroke-width="1.800"/><rect x="-7" y="6.500" width="5.500" height="4.500" fill="#1ba1e2"/><path d="M-6 6.500V5.500a1.500 1.500 0 0 1 3.500 0V6.500" fill="none" stroke="#1ba1e2"/><rect x="-5" y="8" width="1.800" height="1.500" fill="#fff"/></g></defs>
<use href="#js" x="121" y="87"/><use href="#js" x="121" y="105"/><use href="#js" x="121" y="123"/><use href="#js" x="121" y="141"/><use href="#js" x="121" y="159"/><use href="#js" x="121" y="177"/><use href="#js" x="121" y="195"/><use href="#js" x="121" y="213"/><use href="#js" x="121" y="231"/><use href="#js" x="121" y="249"/><use href="#js" x="121" y="267"/><use href="#js" x="121" y="285"/><use href="#js" x="121" y="303"/><use href="#js" x="121" y="321"/><use href="#js" x="121" y="339"/><use href="#js" x="121" y="357"/><use href="#js" x="121" y="375"/><use href="#js" x="121" y="393"/><use href="#js" x="121" y="411"/><use href="#js" x="121" y="429"/><use href="#js" x="121" y="447"/><use href="#js" x="121" y="465"/><use href="#js" x="121" y="483"/><use href="#js" x="121" y="501"/>
<path d="M83 521v8l5-4z" fill="#fff" stroke="#222"/><path d="M104 520h3l1 2h9v9h-13z" fill="#deb97f"/>
<!-- header -->
<path d="M215 21h8l-4 4z" fill="#c8d0ec"/><path d="M233 19h5v6h-5zM231 25h9M235.500 25v5" stroke="#dfe4f4" fill="none"/><path d="M248 19l8 9M256 19l-8 9" stroke="#dfe4f4" stroke-width="1.200"/>
<!-- toolbar -->
<circle cx="15" cy="47" r="6" fill="#a9aebb"/><path d="M12 47l3-3v2h3v2h-3v2z" fill="#ccd5f0"/>
<circle cx="37" cy="47" r="6" fill="#a9aebb"/><path d="M40 47l-3-3v2h-3v2h3v2z" fill="#ccd5f0"/>
<path d="M52 47l7-7 7 7M54 46v7h10v-7" fill="#f5f5f5" stroke="#333" stroke-width="1.300"/><rect x="57" y="48" width="4" height="5" fill="#333"/>
<rect x="81" y="41" width="8" height="11" fill="#fff" stroke="#444"/><path d="M82.500 44h5M82.500 46.500h5M82.500 49h5" stroke="#444"/><path d="M74 50l2-2 3 2.500 2-2.500v6l-2-2-3 2.500-2-2z" fill="#7a3fc4"/>
<path d="M95.500 36v24M226.500 36v24" stroke="#a4afd0"/>
<circle cx="113" cy="48.500" r="5" fill="none" stroke="#333" stroke-width="1.200"/><path d="M113 45.500v3h2.500M107 40h4M108 40l1.500 3" stroke="#333"/><path d="M126 46h6l-3 3z" fill="#333"/>
<path d="M140 45h10M143.500 42l-3.500 3 3.500 3M151 50h-10M147.500 47l3.500 3-3.500 3" fill="none" stroke="#333" stroke-width="1.500"/>
<path d="M166 42.500a6 6 0 1 0 4.500 2M164 38.500l3.500 3.500-3.500 3.500" fill="none" stroke="#0e4f8e" stroke-width="2"/>
<path d="M185 45h7v7h-7zM188 45v-3h8v7h-4" fill="none" stroke="#333"/>
<rect x="201.500" y="35.500" width="21" height="23" fill="#fcf0d4" stroke="#e5c365"/><path d="M206 40h7l3 3v9h-10zM213 44h5v11h-9v-3" fill="none" stroke="#333"/><path d="M208 45h5M208 48h5" stroke="#333"/>
<path d="M258 35v-3M255 35v-3" stroke="#667" stroke-width="1.500"/>
<!-- search magnifier -->
<circle cx="244" cy="71" r="3.500" fill="none" stroke="#333" stroke-width="1.800"/><path d="M241.500 74l-4 4.500" stroke="#333" stroke-width="2"/><path d="M251 73h5l-2.500 3z" fill="#333"/>
<!-- v scroll -->
<path d="M254 92l-5 5h10z" transform="translate(0 -2)" fill="#868999"/><path d="M249 510h10l-5 5z" transform="translate(0 -4)" fill="#868999"/>
</svg>
<svg class="b" style="left:1650px;top:590px" width="263" height="30">
<path d="M13 7l-5 5 5 5zM210 7l5 5-5 5z" fill="#868999"/>
</svg>

<!-- Properties -->
<div style="left:1650px;top:618px;width:263px;height:21px;background:#3f5187;line-height:21px;color:#f2f4fb;padding-left:4px;box-sizing:border-box;font-size:12px">Properties</div>
<div style="left:1650px;top:639px;width:263px;height:25px;background:#fbfcfe"></div>
<div style="left:1650px;top:664px;width:263px;height:25px;background:#ccd5f0"></div>
<div style="left:1650px;top:689px;width:263px;height:321px;background:#f6f7fc"></div>
<div style="left:1650px;top:947px;width:263px;height:1px;background:#eceef5"></div>
<svg class="b" style="left:1650px;top:590px" width="263" height="100">
<path d="M215 36h8l-4 4z" fill="#c8d0ec"/><path d="M233 31h5v7h-5zM231 38h9M235.500 38v6" stroke="#dfe4f4" fill="none"/><path d="M248 31l8 9M256 31l-8 9" stroke="#dfe4f4" stroke-width="1.200"/>
<path d="M254 59h7l-3.500 4z" fill="#222"/>
<rect x="3.500" y="75.500" width="22" height="22" fill="#fcf0d4" stroke="#e5c365"/><path d="M7 79h6v5h-6zM7 87h6v5h-6zM15 80h8M15 83h6M15 88h8M15 91h6" stroke="#333" fill="none"/>
<text x="30" y="85" font-size="8" font-weight="bold" font-family="Liberation Sans" fill="#333">A</text><text x="30" y="95" font-size="8" font-weight="bold" font-family="Liberation Sans" fill="#333">Z</text><path d="M41 79v13M38 89l3 3 3-3" fill="none" stroke="#0e4f8e" stroke-width="1.600"/>
<path d="M52 77v20" stroke="#8f9cc5"/>
<path d="M60 95l9-9" stroke="#8a8d96" stroke-width="3"/><circle cx="71" cy="83" r="4" fill="none" stroke="#8a8d96" stroke-width="2.500"/>
</svg>

<!-- watermark -->
<div style="left:1600px;top:946px;font-size:20px;line-height:24px;color:rgba(178,178,182,.85)">Activate Windows</div>
<div style="left:1600px;top:972px;font-size:14.500px;line-height:18px;color:rgba(178,178,182,.85)">Go to Settings to activate Windows.</div>

<!-- status bar -->
<div style="left:0;top:1017px;width:1920px;height:23px;background:#3f5187"></div>
<div style="left:0;top:1040px;width:1920px;height:4px;background:#2b2b2b"></div>
<div class="w" style="left:28px;top:1021px;line-height:17px">Ready</div>
<div class="w" style="left:1558px;top:1021px;line-height:17px">6</div>
<div class="w" style="left:1605px;top:1021px;line-height:17px">3</div>
<div class="w" style="left:1655px;top:1021px;line-height:17px">Admin-Web-master</div>
<div class="w" style="left:1805px;top:1021px;line-height:17px">master</div>
<svg class="b" style="left:0;top:1017px" width="1920" height="23">
<path d="M7 5h13l-3 11H5z" fill="none" stroke="#fff" stroke-width="1.200"/>
<path d="M1541 17V8M1537 11l4-4 4 4" fill="none" stroke="#fff" stroke-width="1.800"/>
<path d="M1587 15l7-8 3 3-7 7-4 1z" fill="#eef"/>
<path d="M1641 4l8 8-8 8-8-8z" fill="#eef"/><circle cx="1641" cy="9" r="1.500" fill="#3f5187"/><circle cx="1641" cy="15" r="1.500" fill="#3f5187"/>
<path d="M1791 19V11M1785 5l6 6 6-6" fill="none" stroke="#eef" stroke-width="1.400"/>
<path d="M1848 12l4-4 4 4z" fill="#fff"/>
<path d="M1882 15c2-2 0-9 5-9s3 7 5 9z" fill="#dfe4f4"/><circle cx="1896" cy="16" r="5.500" fill="#e81a1a"/><text x="1893" y="20" font-size="10" font-weight="bold" font-family="Liberation Sans" fill="#fff">2</text>
</svg>
</div></body></html>
